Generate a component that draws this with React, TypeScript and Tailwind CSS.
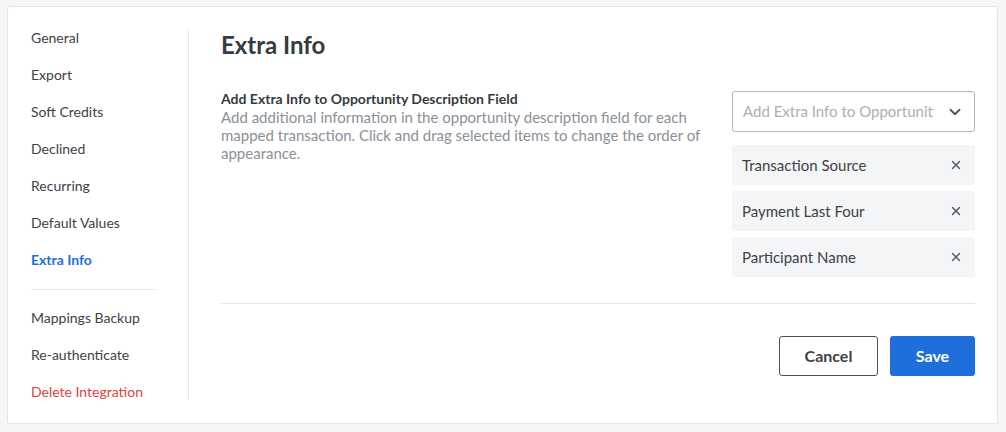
import { ChevronDown, X } from "lucide-react";

const navTop = ["General", "Export", "Soft Credits", "Declined", "Recurring", "Default Values"];
const selected = ["Transaction Source", "Payment Last Four", "Participant Name"];

export default function App() {
  return (
    <div
      className="h-[432px] w-[1006px] bg-[#f5f6f8] pt-[6px] pl-[7px] pr-[8px]"
      style={{ fontFamily: "Lato, 'Open Sans', sans-serif" }}
    >
      <div className="flex h-[418px] rounded-[3px] border border-[#e4e6e9] bg-white">
        {/* sidebar */}
        <div className="my-[23px] flex w-[181px] flex-col gap-[21px] border-r border-[#e4e6e9] pl-[23px] text-[14px] leading-[16px] text-[#3d4248]">
          {navTop.map((item) => (
            <div key={item} className="shrink-0">
              {item}
            </div>
          ))}
          <div className="shrink-0 font-bold text-[#1f6fdb]">Extra Info</div>
          <div className="-mb-px h-px w-[124px] shrink-0 bg-[#e4e6e9]" />
          <div className="shrink-0">Mappings Backup</div>
          <div className="shrink-0">Re-authenticate</div>
          <div className="shrink-0 text-[#d6453d]">Delete Integration</div>
        </div>

        {/* main */}
        <div className="flex flex-1 flex-col pl-[32px] pr-[22px] pt-[23px]">
          <h1 className="text-[24px] font-bold leading-[30px] text-[#353b41]">Extra Info</h1>

          <div className="mt-[30px] flex justify-between">
            <div className="w-[480px]">
              <div className="text-[14px] font-bold leading-[18px] text-[#353b41]">
                Add Extra Info to Opportunity Description Field
              </div>
              <p className="text-[15px] leading-[18px] text-[#8a9099]">
                Add additional information in the opportunity description field for each mapped
                transaction. Click and drag selected items to change the order of appearance.
              </p>
            </div>

            <div className="mt-px flex w-[243px] flex-col">
              <div className="flex h-[41px] items-center justify-between rounded-[3px] border border-[#b3b9c0] pl-[10px] pr-[10px]">
                <span className="min-w-0 flex-1 overflow-hidden whitespace-nowrap text-[15px] text-[#a9afb6]">
                  Add Extra Info to Opportunity Description Field
                </span>
                <ChevronDown className="ml-3 h-[18px] w-[18px] shrink-0 text-[#4f555c]" strokeWidth={2.5} />
              </div>
              <div className="mt-[13px] flex flex-col gap-[6px]">
                {selected.map((s) => (
                  <div
                    key={s}
                    className="flex h-[40px] items-center justify-between rounded-[3px] bg-[#f4f5f7] pl-[10px] pr-[12px] text-[15px] text-[#3d4248]"
                  >
                    <span>{s}</span>
                    <X className="h-[14px] w-[14px] text-[#555b62]" strokeWidth={2.5} />
                  </div>
                ))}
              </div>
            </div>
          </div>

          <div className="mt-[26px] h-px bg-[#e4e6e9]" />

          <div className="mt-[32px] flex justify-end gap-[12px]">
            <button className="h-[40px] w-[99px] rounded-[3px] border border-[#4a5056] bg-white text-[16px] font-bold text-[#3d4248]">
              Cancel
            </button>
            <button className="h-[40px] w-[85px] rounded-[3px] bg-[#1f6fdb] text-[16px] font-bold text-white">
              Save
            </button>
          </div>
        </div>
      </div>
    </div>
  );
}
